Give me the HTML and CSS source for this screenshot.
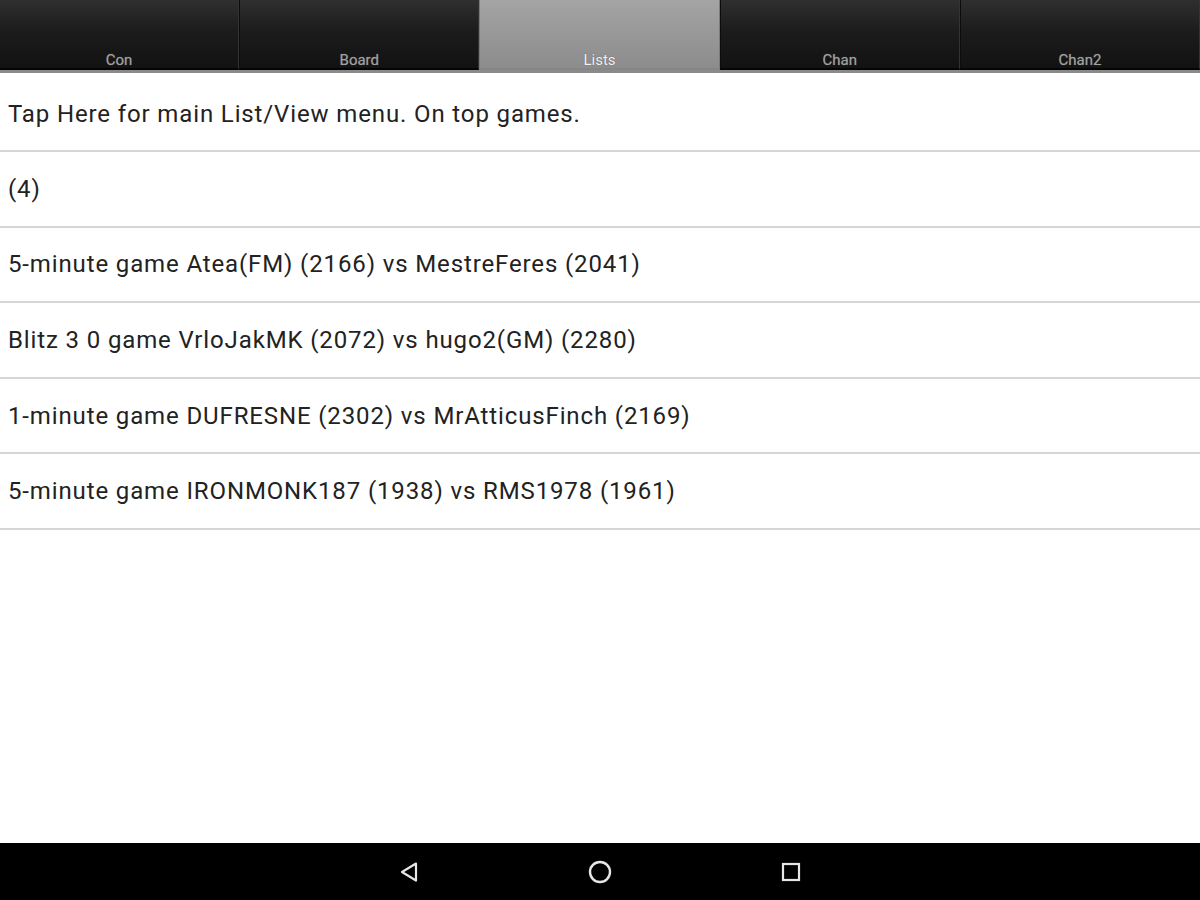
FILE: index.html
```html
<!DOCTYPE html>
<html lang="en">
<head>
    <meta charset="UTF-8">
    <meta name="viewport" content="width=device-width, initial-scale=1.0">
    <title>Lists</title>
    <link rel="stylesheet" href="styles.css">
</head>
<body>
    <div class="screen">
        <div class="tab-bar">
            <div class="tab">Con</div>
            <div class="tab">Board</div>
            <div class="tab active">Lists</div>
            <div class="tab">Chan</div>
            <div class="tab">Chan2</div>
        </div>

        <ul class="game-list">
            <li class="menu-row">Tap Here for main List/View menu. On top games.</li>
            <li>(4)</li>
            <li>5-minute game Atea(FM) (2166) vs MestreFeres (2041)</li>
            <li>Blitz 3 0 game VrloJakMK (2072) vs hugo2(GM) (2280)</li>
            <li>1-minute game DUFRESNE (2302) vs MrAtticusFinch (2169)</li>
            <li>5-minute game IRONMONK187 (1938) vs RMS1978 (1961)</li>
        </ul>

        <div class="nav-bar">
            <svg class="nav-icon" width="24" height="24" viewBox="0 0 24 24">
                <path d="M19 3.5 L5 12 L19 20.5 Z" fill="none" stroke="#e6e6e6" stroke-width="2.2" stroke-linejoin="round"/>
            </svg>
            <svg class="nav-icon" width="26" height="26" viewBox="0 0 26 26">
                <circle cx="13" cy="13" r="10" fill="none" stroke="#e6e6e6" stroke-width="2.4"/>
            </svg>
            <svg class="nav-icon" width="24" height="24" viewBox="0 0 24 24">
                <rect x="4" y="4" width="16" height="16" fill="none" stroke="#e6e6e6" stroke-width="2.2"/>
            </svg>
        </div>
    </div>
</body>
</html>
```

FILE: styles.css
```css
:root {
    --text-color: #222222;
    --divider-color: #d6d6d6;
    --font-main: Roboto, "Noto Sans", "Liberation Sans", sans-serif;
}
* { box-sizing: border-box; }
html, body {
    margin: 0;
    height: 100%;
}
body {
    font-family: var(--font-main);
    background: #ffffff;
    color: var(--text-color);
}
.screen {
    display: flex;
    flex-direction: column;
    height: 900px;
}

/* Tabs */
.tab-bar {
    display: flex;
    height: 73px;
    background: #000;
    border-bottom: 3px solid #8a8a8a;
}
.tab {
    flex: 1;
    display: flex;
    align-items: flex-end;
    justify-content: center;
    padding-bottom: 0;
    height: 70px;
    background: linear-gradient(#2f2f2f, #1c1c1c 45%, #121212);
    border-left: 1px solid #0c0c0c;
    border-right: 1px solid #333;
    border-bottom: 2px solid #050505;
    color: #a0a0a0;
    font-size: 15px;
    line-height: 16px;
    text-shadow: 0 0 1px #666;
}
.tab:first-child { border-left: none; }
.tab.active {
    background: linear-gradient(#a4a4a4, #8c8c8c);
    border-color: #7a7a7a;
    border-bottom-color: #868686;
    color: #f2f2f2;
    text-shadow: 0 0 1px #555;
}

/* List */
.game-list {
    list-style: none;
    margin: 0;
    padding: 0;
    flex: 1;
}
.game-list li {
    display: flex;
    align-items: center;
    height: 75.6px;
    padding-left: 8px;
    border-bottom: 2px solid var(--divider-color);
    font-size: 24px;
    letter-spacing: 0.87px;
}
.game-list li.menu-row {
    height: 79px;
    padding-top: 4px;
}

/* System navigation */
.nav-bar {
    display: flex;
    justify-content: center;
    align-items: center;
    gap: 166px;
    height: 57px;
    background: #000;
}
.nav-icon { display: block; }
```
